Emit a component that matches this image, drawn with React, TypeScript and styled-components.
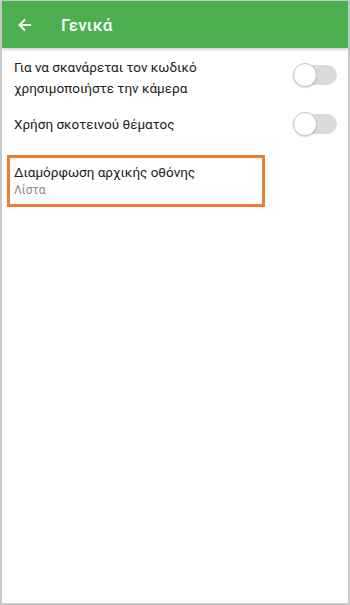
import React from "react"
import styled, { createGlobalStyle } from "styled-components"

const GlobalStyle = createGlobalStyle`
  html, body {
    margin: 0;
    padding: 0;
    background: #ffffff;
  }
  body {
    font-family: Roboto, "Noto Sans", sans-serif;
  }
`

const Frame = styled.div`
  width: 350px;
  height: 605px;
  box-sizing: border-box;
  border: 2px solid #c8c8c8;
  border-top-width: 1px;
  background: #ffffff;
  display: flex;
  flex-direction: column;
  overflow: hidden;
`

const Toolbar = styled.header`
  height: 47px;
  flex-shrink: 0;
  background-color: #4caf50;
  display: flex;
  align-items: center;
  padding-left: 14px;
  box-shadow: 0 1px 3px rgba(0, 0, 0, 0.25);
  position: relative;
  z-index: 1;
`

const BackButton = styled.div`
  width: 18px;
  height: 18px;
  display: flex;
  align-items: center;
  justify-content: center;
  margin-right: 27px;
`

const Title = styled.h1`
  margin: 0;
  font-size: 17px;
  font-weight: 500;
  color: #ffffff;
  letter-spacing: 0.2px;
`

const List = styled.div`
  display: flex;
  flex-direction: column;
  padding-top: 8px;
`

const Row = styled.div<{ $h: number }>`
  display: flex;
  align-items: center;
  justify-content: space-between;
  padding: 0 11px 0 12px;
  min-height: ${(p) => p.$h}px;
`

const Label = styled.div`
  font-size: 13.5px;
  line-height: 21px;
  color: #212121;
`

const Track = styled.div<{ $lift?: number }>`
  width: 43px;
  height: 20px;
  border-radius: 10px;
  background: #dadada;
  position: relative;
  flex-shrink: 0;
  margin-bottom: ${(p) => p.$lift ?? 0}px;
`

const Thumb = styled.div`
  position: absolute;
  left: -1px;
  top: -2px;
  width: 24px;
  height: 24px;
  box-sizing: border-box;
  border-radius: 50%;
  background: #ffffff;
  border: 1px solid #c4c4c4;
  box-shadow: 0 1px 1px rgba(0, 0, 0, 0.15);
`

const Highlight = styled.div`
  margin: 7px 0 0 5px;
  width: 258px;
  height: 52px;
  box-sizing: border-box;
  border: 3px solid #ef7d31;
  padding: 5px 0 0 4px;
  display: flex;
  flex-direction: column;
`

const Primary = styled.div`
  font-size: 13.5px;
  line-height: 19px;
  color: #212121;
`

const Secondary = styled.div`
  font-size: 12px;
  line-height: 16px;
  color: #8a8a8a;
`

const Switch = ({ lift }: { lift?: number }) => (
  <Track $lift={lift}>
    <Thumb />
  </Track>
)

const App = () => {
  return (
    <>
      <GlobalStyle />
      <Frame>
        <Toolbar>
          <BackButton>
            <svg width="16" height="16" viewBox="0 0 16 16" fill="none">
              <path d="M14 8H2.5M8 2.5L2.5 8L8 13.5" stroke="#fff" strokeWidth="1.8" />
            </svg>
          </BackButton>
          <Title>Γενικά</Title>
        </Toolbar>
        <List>
          <Row $h={44}>
            <Label>
              Για να σκανάρεται τον κωδικό
              <br />
              χρησιμοποιήστε την κάμερα
            </Label>
            <Switch lift={6} />
          </Row>
          <Row $h={48}>
            <Label>Χρήση σκοτεινού θέματος</Label>
            <Switch />
          </Row>
          <Highlight>
            <Primary>Διαμόρφωση αρχικής οθόνης</Primary>
            <Secondary>Λίστα</Secondary>
          </Highlight>
        </List>
      </Frame>
    </>
  )
}

export default App
